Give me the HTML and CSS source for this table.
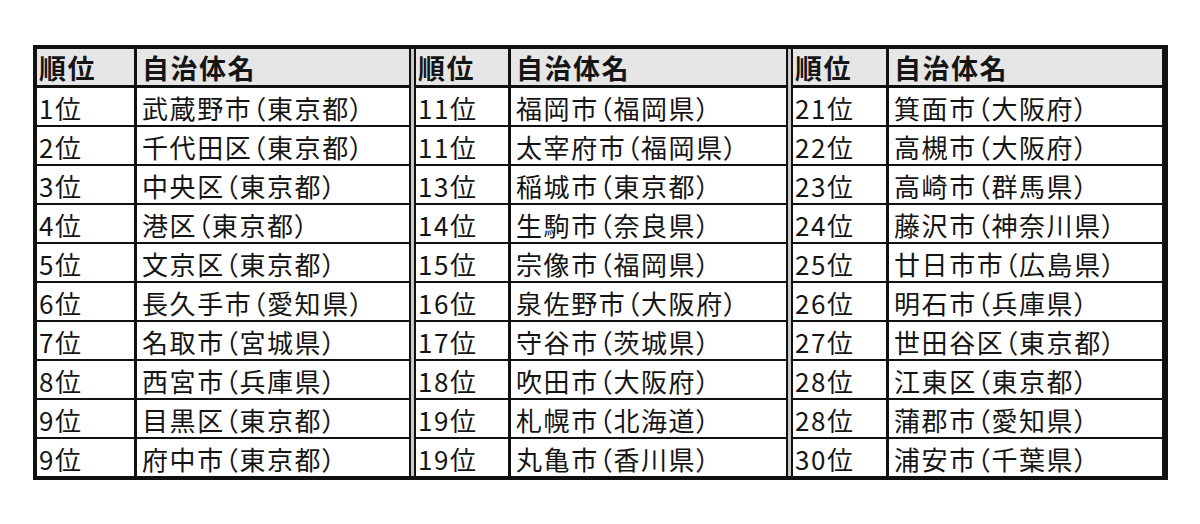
FILE: index.html
```html
<!DOCTYPE html>
<html lang="ja">
<head>
<meta charset="utf-8">
<title>ランキング</title>
<link rel="stylesheet" href="styles.css">
</head>
<body>
<div class="outer">
  <div class="block b1">
    <div class="c rank hd">順位</div><div class="c name hd">自治体名</div>
    <div class="c rank">1位</div><div class="c name">武蔵野市（東京都）</div>
    <div class="c rank">2位</div><div class="c name">千代田区（東京都）</div>
    <div class="c rank">3位</div><div class="c name">中央区（東京都）</div>
    <div class="c rank">4位</div><div class="c name">港区（東京都）</div>
    <div class="c rank">5位</div><div class="c name">文京区（東京都）</div>
    <div class="c rank">6位</div><div class="c name">長久手市（愛知県）</div>
    <div class="c rank">7位</div><div class="c name">名取市（宮城県）</div>
    <div class="c rank">8位</div><div class="c name">西宮市（兵庫県）</div>
    <div class="c rank">9位</div><div class="c name">目黒区（東京都）</div>
    <div class="c rank last">9位</div><div class="c name last">府中市（東京都）</div>
  </div>
  <div class="sep"></div>
  <div class="block b2">
    <div class="c rank hd">順位</div><div class="c name hd">自治体名</div>
    <div class="c rank">11位</div><div class="c name">福岡市（福岡県）</div>
    <div class="c rank">11位</div><div class="c name">太宰府市（福岡県）</div>
    <div class="c rank">13位</div><div class="c name">稲城市（東京都）</div>
    <div class="c rank">14位</div><div class="c name">生駒市（奈良県）</div>
    <div class="c rank">15位</div><div class="c name">宗像市（福岡県）</div>
    <div class="c rank">16位</div><div class="c name">泉佐野市（大阪府）</div>
    <div class="c rank">17位</div><div class="c name">守谷市（茨城県）</div>
    <div class="c rank">18位</div><div class="c name">吹田市（大阪府）</div>
    <div class="c rank">19位</div><div class="c name">札幌市（北海道）</div>
    <div class="c rank last">19位</div><div class="c name last">丸亀市（香川県）</div>
  </div>
  <div class="sep"></div>
  <div class="block b3">
    <div class="c rank hd">順位</div><div class="c name hd">自治体名</div>
    <div class="c rank">21位</div><div class="c name">箕面市（大阪府）</div>
    <div class="c rank">22位</div><div class="c name">高槻市（大阪府）</div>
    <div class="c rank">23位</div><div class="c name">高崎市（群馬県）</div>
    <div class="c rank">24位</div><div class="c name">藤沢市（神奈川県）</div>
    <div class="c rank">25位</div><div class="c name">廿日市市（広島県）</div>
    <div class="c rank">26位</div><div class="c name">明石市（兵庫県）</div>
    <div class="c rank">27位</div><div class="c name">世田谷区（東京都）</div>
    <div class="c rank">28位</div><div class="c name">江東区（東京都）</div>
    <div class="c rank">28位</div><div class="c name">蒲郡市（愛知県）</div>
    <div class="c rank last">30位</div><div class="c name last">浦安市（千葉県）</div>
  </div>
</div>
</body>
</html>
```
FILE: styles.css
```css
* { box-sizing: border-box; }
html, body { margin: 0; padding: 0; background: #fff; }
body {
  font-family: "Noto Sans CJK JP", "Noto Sans", sans-serif;
  color: #151515;
  font-size: 26px;
  letter-spacing: 1.6px;
  font-feature-settings: "palt";
}
.outer {
  display: flex;
  width: fit-content;
  margin: 45px 0 0 33px;
  border-top: 4px solid #111;
  border-bottom: 4px solid #111;
}
.block { display: grid; }
.b1 { grid-template-columns: 100px 274px; border-left: 4px solid #111; }
.b2 { grid-template-columns: 95px 277px; border-left: 2px solid #111; }
.b3 { grid-template-columns: 96px 279px; border-left: 2px solid #111; }
.sep { width: 3px; background: #c8c8c8; }
.c {
  height: 39px;
  line-height: 37px;
  padding-top: 1px;
  border-bottom: 2px solid #111;
  white-space: nowrap;
  overflow: hidden;
}
.c.last { height: 37px; border-bottom: none; }
.rank { border-right: 3px solid #111; padding-left: 2px; }
.name { border-right: 2px solid #111; padding-left: 5px; }
.b3 .name { border-right: 6px solid #111; }
.hd {
  height: 39px;
  line-height: 35px;
  border-bottom: 3px solid #111;
  background: #e6e6e6;
  font-weight: 700;
  font-size: 27px;
  letter-spacing: 1.5px;
}
```
